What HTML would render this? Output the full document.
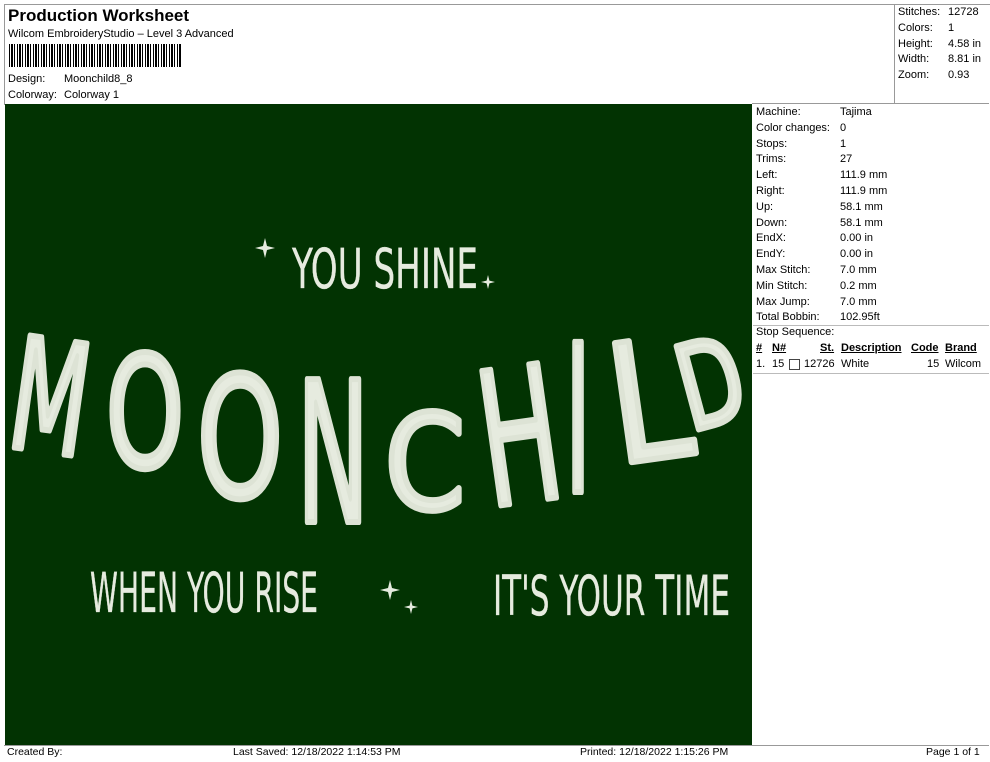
<!DOCTYPE html>
<html><head><meta charset="utf-8"><style>
body{margin:0;width:990px;height:762px;background:#fff;font-family:"Liberation Sans",Arial,sans-serif;color:#000;position:relative;overflow:hidden}
.a{position:absolute;white-space:nowrap}
.t{font-size:11px}
</style></head><body>
<div class="a" style="left:4px;top:4px;width:985px;height:100px;border-top:1px solid #999;border-left:1px solid #999"></div>
<div class="a" style="left:894px;top:4px;width:1px;height:100px;background:#999"></div>
<div class="a" style="left:752px;top:103px;width:237px;height:1px;background:#999"></div>
<div class="a" style="left:8px;top:6px;font-size:17px;font-weight:bold">Production Worksheet</div>
<div class="a t" style="left:8px;top:28px">Wilcom EmbroideryStudio – Level 3 Advanced</div>
<div class="a" style="left:9px;top:44px;width:173px;height:23px;background:repeating-linear-gradient(90deg,#000 0 1px,#fff 1px 2px,#000 2px 4px,#fff 4px 5px,#000 5px 6px,#fff 6px 8px)"></div>
<div class="a t" style="left:8px;top:73px">Design:</div><div class="a t" style="left:64px;top:73px">Moonchild8_8</div>
<div class="a t" style="left:8px;top:89px">Colorway:</div><div class="a t" style="left:64px;top:89px">Colorway 1</div>
<div class="a t" style="left:898px;top:5px;line-height:15.8px">Stitches:<br>Colors:<br>Height:<br>Width:<br>Zoom:</div>
<div class="a t" style="left:948px;top:5px;line-height:15.8px">12728<br>1<br>4.58 in<br>8.81 in<br>0.93</div>
<div class="a" style="left:5px;top:104px;width:747px;height:641px;background:#023302"></div>
<div class="a t" style="left:756px;top:105px;line-height:15.8px">Machine:<br>Color changes:<br>Stops:<br>Trims:<br>Left:<br>Right:<br>Up:<br>Down:<br>EndX:<br>EndY:<br>Max Stitch:<br>Min Stitch:<br>Max Jump:<br>Total Bobbin:</div>
<div class="a t" style="left:840px;top:105px;line-height:15.8px">Tajima<br>0<br>1<br>27<br>111.9 mm<br>111.9 mm<br>58.1 mm<br>58.1 mm<br>0.00 in<br>0.00 in<br>7.0 mm<br>0.2 mm<br>7.0 mm<br>102.95ft</div>
<div class="a" style="left:753px;top:325px;width:236px;height:1px;background:#bbb"></div>
<div class="a t" style="left:756px;top:326px">Stop Sequence:</div>
<div class="a t" style="left:756px;top:342px;font-weight:bold;text-decoration:underline">#</div>
<div class="a t" style="left:772px;top:342px;font-weight:bold;text-decoration:underline">N#</div>
<div class="a t" style="left:820px;top:342px;font-weight:bold;text-decoration:underline">St.</div>
<div class="a t" style="left:841px;top:342px;font-weight:bold;text-decoration:underline">Description</div>
<div class="a t" style="left:911px;top:342px;font-weight:bold;text-decoration:underline">Code</div>
<div class="a t" style="left:945px;top:342px;font-weight:bold;text-decoration:underline">Brand</div>
<div class="a t" style="left:756px;top:358px">1.</div><div class="a t" style="left:772px;top:358px">15</div>
<div class="a" style="left:789px;top:359px;width:9px;height:9px;border:1px solid #444"></div>
<div class="a t" style="left:804px;top:358px">12726</div><div class="a t" style="left:841px;top:358px">White</div>
<div class="a t" style="left:927px;top:358px">15</div><div class="a t" style="left:945px;top:358px">Wilcom</div>
<div class="a" style="left:753px;top:373px;width:236px;height:1px;background:#bbb"></div>
<div class="a" style="left:4px;top:745px;width:985px;height:1px;background:#999"></div>
<div class="a t" style="left:7px;top:746px;font-size:10.5px">Created By:</div>
<div class="a t" style="left:233px;top:746px;font-size:10.5px">Last Saved: 12/18/2022 1:14:53 PM</div>
<div class="a t" style="left:580px;top:746px;font-size:10.5px">Printed: 12/18/2022 1:15:26 PM</div>
<div class="a t" style="left:926px;top:746px;font-size:10.5px">Page 1 of 1</div>
<svg class="a" style="left:0;top:0" width="990" height="762">
<defs><g id="st"><path d="M0-10 L2-2 L10 0 L2 2 L0 10 L-2 2 L-10 0 L-2-2Z"/></g></defs>
<g fill="#e6ebdf" font-family="DejaVu Sans Condensed,DejaVu Sans,sans-serif">
<g font-size="55" stroke="#e6ebdf" stroke-width="0.3">
<text x="292" y="288" textLength="186" lengthAdjust="spacingAndGlyphs">YOU SHINE</text>
<text x="90" y="612" textLength="228" lengthAdjust="spacingAndGlyphs">WHEN YOU RISE</text>
<text x="493" y="615" textLength="237" lengthAdjust="spacingAndGlyphs">IT'S YOUR TIME</text>
</g>
<g font-size="155" stroke="#dde3d5" stroke-width="6" stroke-linejoin="round">
<text x="12" y="452" textLength="76" lengthAdjust="spacingAndGlyphs" transform="rotate(8 50 400)">M</text>
<text x="106" y="467" textLength="78" lengthAdjust="spacingAndGlyphs">O</text>
<text x="197" y="497" textLength="86" lengthAdjust="spacingAndGlyphs" font-size="168">O</text>
<text x="297" y="522" textLength="72" lengthAdjust="spacingAndGlyphs" font-size="196">N</text>
<text x="385" y="509" textLength="80" lengthAdjust="spacingAndGlyphs" font-size="132">C</text>
<text x="481" y="502" textLength="78" lengthAdjust="spacingAndGlyphs" font-size="186" transform="rotate(-8 520 440)">H</text>
<text x="565" y="492" textLength="26" lengthAdjust="spacingAndGlyphs" font-size="206">I</text>
<text x="609" y="459" textLength="80" lengthAdjust="spacingAndGlyphs" font-size="165" transform="rotate(-8 650 400)">L</text>
<text x="679" y="425" textLength="64" lengthAdjust="spacingAndGlyphs" font-size="118" transform="rotate(-15 710 385)">D</text>
</g>
<use href="#st" x="265" y="248"/><use href="#st" transform="translate(488 282) scale(.7)"/>
<use href="#st" x="390" y="590"/><use href="#st" transform="translate(411 607) scale(.7)"/>
</g>
</svg>
</body></html>
